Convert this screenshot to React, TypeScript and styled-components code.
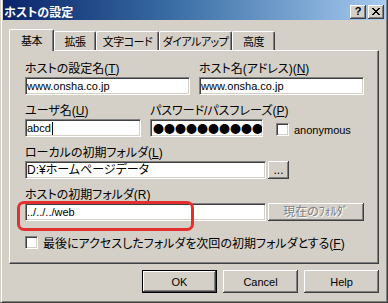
import React from "react";
import styled, { createGlobalStyle } from "styled-components";

const FACE = "#d4d0c8";

const Global = createGlobalStyle`
  html, body { margin: 0; padding: 0; background: ${FACE}; }
  body {
    font-family: "Liberation Sans", "Noto Sans CJK JP", sans-serif;
    font-size: 12px;
    font-feature-settings: "palt";
    color: #000;
  }
  * { box-sizing: border-box; }
`;

const Window = styled.div`
  width: 388px;
  height: 303px;
  background: ${FACE};
  border-left: 1px solid ${FACE};
  border-right: 1px solid #404040;
  border-bottom: 1px solid #404040;
  box-shadow: inset 1px 0 #fff, inset -1px -1px #808080;
  padding: 0 2px 2px 2px;
  display: flex;
  flex-direction: column;
`;

const TitleBar = styled.div`
  height: 20px;
  flex: none;
  display: flex;
  align-items: center;
  padding: 3px 1px 0 1px;
  background: linear-gradient(to right, #0a246a 0%, #3a6ea5 45%, #a6caf0 100%);
`;

const TitleText = styled.div`
  flex: 1;
  color: #fff;
  font-weight: bold;
  font-size: 12px;
  line-height: 14px;
  font-family: "Noto Sans CJK JP", sans-serif;
`;

const TitleButtons = styled.div`
  display: flex;
  gap: 2px;
`;

const CaptionButton = styled.div`
  width: 16px;
  height: 14px;
  background: ${FACE};
  box-shadow: inset -1px -1px #404040, inset 1px 1px #fff, inset -2px -2px #808080,
    inset 2px 2px ${FACE};
  display: flex;
  align-items: center;
  justify-content: center;
  font-family: "Liberation Sans", sans-serif;
  font-weight: bold;
  font-size: 11px;
  line-height: 11px;
  padding-bottom: 1px;
`;

const Body = styled.div`
  flex: 1;
  padding: 9px 6px 0 6px;
  display: flex;
  flex-direction: column;
`;

const TabRow = styled.div`
  height: 21px;
  display: flex;
  align-items: flex-end;
`;

const Tab = styled.div<{ $w: number; $active?: boolean }>`
  width: ${(p) => p.$w}px;
  flex: none;
  height: ${(p) => (p.$active ? 22 : 19)}px;
  margin-bottom: ${(p) => (p.$active ? -1 : 0)}px;
  position: relative;
  z-index: ${(p) => (p.$active ? 2 : 0)};
  background: ${FACE};
  border-top: 1px solid #fff;
  border-left: 1px solid #fff;
  border-right: 1px solid #404040;
  border-radius: 2px 2px 0 0;
  box-shadow: inset -1px 0 #808080;
  display: flex;
  align-items: center;
  justify-content: center;
  font-family: "Noto Sans CJK JP", sans-serif;
  font-size: 11px;
  letter-spacing: -0.5px;
  line-height: 14px;
  white-space: nowrap;
  padding-bottom: ${(p) => (p.$active ? 2 : 0)}px;
`;

const Panel = styled.div`
  position: relative;
  height: 214px;
  flex: none;
  border-top: 1px solid #fff;
  border-left: 1px solid #fff;
  border-right: 1px solid #404040;
  border-bottom: 1px solid #404040;
  box-shadow: inset -1px -1px #808080;
  padding: 11px 0 0 15px;
  display: flex;
  flex-direction: column;
  gap: 9px;
`;

const Row = styled.div<{ $gap: number }>`
  display: flex;
  align-items: flex-end;
  gap: ${(p) => p.$gap}px;
`;

const Field = styled.div<{ $w?: number }>`
  display: flex;
  flex-direction: column;
  width: ${(p) => (p.$w ? `${p.$w}px` : "auto")};
  flex: none;
`;

const Label = styled.div`
  height: 14px;
  line-height: 14px;
  margin-bottom: 1px;
  white-space: nowrap;
  font-size: 12px;
`;

const EditRow = styled.div`
  display: flex;
  gap: 2px;
`;

const Edit = styled.div<{ $w: number; $latin?: boolean }>`
  width: ${(p) => p.$w}px;
  flex: none;
  height: 18px;
  background: #fff;
  border: 1px solid;
  border-color: #808080 #fff #fff #808080;
  box-shadow: inset 1px 1px #404040, inset -1px -1px ${FACE};
  padding: 0 0 0 1px;
  display: flex;
  align-items: center;
  white-space: nowrap;
  overflow: hidden;
  font-size: ${(p) => (p.$latin ? 11 : 12)}px;
  line-height: 14px;
`;

const Dots = styled.span`
  font-family: "Noto Sans CJK JP", sans-serif;
  font-size: 11px;
  padding-left: 1px;
`;

const Caret = styled.span`
  display: inline-block;
  width: 1px;
  height: 13px;
  background: #000;
  margin-left: 1px;
`;

const CheckBox = styled.div`
  width: 13px;
  height: 13px;
  flex: none;
  background: #fff;
  border: 1px solid;
  border-color: #808080 #fff #fff #808080;
  box-shadow: inset 1px 1px #404040, inset -1px -1px ${FACE};
`;

const CheckLine = styled.div<{ $gap: number }>`
  display: flex;
  align-items: center;
  gap: ${(p) => p.$gap}px;
  white-space: nowrap;
`;

const AnonBox = styled(CheckLine)`
  margin-left: 4px;
  margin-bottom: 1px;
  font-size: 11px;
`;

const LastRow = styled(CheckLine)`
  margin-top: 6px;
  height: 13px;
  font-size: 12px;
`;

const SmallButton = styled.div<{ $w: number; $disabled?: boolean }>`
  width: ${(p) => p.$w}px;
  flex: none;
  height: 18px;
  background: ${FACE};
  box-shadow: inset -1px -1px #404040, inset 1px 1px #fff, inset -2px -2px #808080,
    inset 2px 2px ${FACE};
  display: flex;
  align-items: center;
  justify-content: center;
  font-size: 12px;
  line-height: 14px;
  color: ${(p) => (p.$disabled ? "#808080" : "#000")};
  text-shadow: ${(p) => (p.$disabled ? "1px 1px 0 #fff" : "none")};
  white-space: nowrap;
`;

const Highlight = styled.div`
  position: absolute;
  left: 7px;
  top: 150px;
  width: 177px;
  height: 30px;
  border: 3px solid #e3302f;
  border-radius: 7px;
  pointer-events: none;
`;

const ButtonRow = styled.div`
  display: flex;
  justify-content: flex-end;
  gap: 6px;
  margin-top: 6px;
`;

const PushButton = styled.div<{ $default?: boolean }>`
  width: 75px;
  height: 23px;
  background: ${FACE};
  border: ${(p) => (p.$default ? "1px solid #000" : "none")};
  box-shadow: inset -1px -1px #404040, inset 1px 1px #fff, inset -2px -2px #808080,
    inset 2px 2px ${FACE};
  display: flex;
  align-items: center;
  justify-content: center;
  font-family: "Liberation Sans", sans-serif;
  font-size: 11px;
`;

const CloseIcon = () => (
  <svg width="8" height="7" viewBox="0 0 8 7" shapeRendering="crispEdges">
    <path
      d="M0 0h2v1H0zM6 0h2v1H6zM1 1h2v1H1zM5 1h2v1H5zM2 2h4v1H2zM3 3h2v1H3zM2 4h4v1H2zM1 5h2v1H1zM5 5h2v1H5zM0 6h2v1H0zM6 6h2v1H6z"
      fill="#000"
    />
  </svg>
);

export default function App() {
  return (
    <>
      <Global />
      <Window>
        <TitleBar>
          <TitleText>ホストの設定</TitleText>
          <TitleButtons>
            <CaptionButton>?</CaptionButton>
            <CaptionButton>
              <CloseIcon />
            </CaptionButton>
          </TitleButtons>
        </TitleBar>
        <Body>
          <TabRow>
            <Tab $w={45} $active>基本</Tab>
            <Tab $w={42}>拡張</Tab>
            <Tab $w={63}>文字コード</Tab>
            <Tab $w={73}>ダイアルアップ</Tab>
            <Tab $w={43}>高度</Tab>
          </TabRow>
          <Panel>
            <Row $gap={9}>
              <Field $w={165}>
                <Label>
                  ホストの設定名(<u>T</u>)
                </Label>
                <Edit $w={165} $latin>www.onsha.co.jp</Edit>
              </Field>
              <Field $w={165}>
                <Label>
                  ホスト名(アドレス)(<u>N</u>)
                </Label>
                <Edit $w={165} $latin>www.onsha.co.jp</Edit>
              </Field>
            </Row>
            <Row $gap={9}>
              <Field $w={116}>
                <Label>
                  ユーザ名(<u>U</u>)
                </Label>
                <Edit $w={116} $latin>
                  abcd
                  <Caret />
                </Edit>
              </Field>
              <Field $w={113}>
                <Label>
                  パスワード/パスフレーズ(<u>P</u>)
                </Label>
                <Edit $w={113}>
                  <Dots>●●●●●●●●●●</Dots>
                </Edit>
              </Field>
              <AnonBox $gap={5}>
                <CheckBox />
                <span>anonymous</span>
              </AnonBox>
            </Row>
            <Field>
              <Label>
                ローカルの初期フォルダ(<u>L</u>)
              </Label>
              <EditRow>
                <Edit $w={241}>D:¥ホームページデータ</Edit>
                <SmallButton $w={21}>...</SmallButton>
              </EditRow>
            </Field>
            <Field>
              <Label>ホストの初期フォルダ(R)</Label>
              <EditRow>
                <Edit $w={241} $latin>../../../web</Edit>
                <SmallButton $w={96} $disabled>
                  現在のﾌｫﾙﾀﾞ
                </SmallButton>
              </EditRow>
            </Field>
            <LastRow $gap={5}>
              <CheckBox />
              <span>
                最後にアクセスしたフォルダを次回の初期フォルダとする(<u>F</u>)
              </span>
            </LastRow>
            <Highlight />
          </Panel>
          <ButtonRow>
            <PushButton $default>OK</PushButton>
            <PushButton>Cancel</PushButton>
            <PushButton>Help</PushButton>
          </ButtonRow>
        </Body>
      </Window>
    </>
  );
}
